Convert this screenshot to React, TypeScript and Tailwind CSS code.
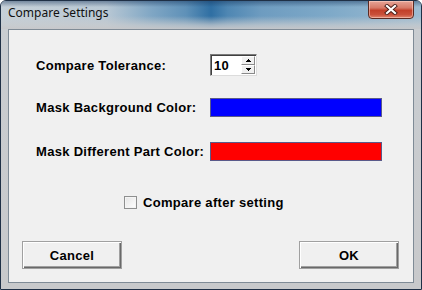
import React from "react";

const label = "text-[13px] font-bold tracking-[0.3px] text-black leading-none";

const CloseGlyph = () => (
  <svg width="14" height="11" viewBox="0 0 14 11">
    <path d="M3 2L11 9M11 2L3 9" stroke="#4a1e18" strokeWidth="4" strokeLinecap="square" />
    <path d="M3 2L11 9M11 2L3 9" stroke="#ffffff" strokeWidth="2.2" strokeLinecap="square" />
  </svg>
);

const SpinBox = ({ value }: { value: string }) => (
  <div className="w-[47px] h-[22px] flex bg-white border border-t-[#7a7a7a] border-l-[#7a7a7a] border-b-[#dcdcdc] border-r-[#dcdcdc] shadow-[inset_1px_1px_0_#404040]">
    <div className="flex-1 flex items-center pl-[3px] pt-[1px]">
      <span className={label}>{value}</span>
    </div>
    <div className="w-[15px] flex flex-col py-[1px] pr-[1px]">
      {["up", "down"].map((d) => (
        <div
          key={d}
          className="flex-1 flex items-center justify-center bg-[#f0f0f0] border border-t-white border-l-white border-b-[#8a8a8a] border-r-[#8a8a8a]"
        >
          <svg width="5" height="3" viewBox="0 0 5 3">
            {d === "up" ? (
              <path d="M2 0h1v1h1v1h1v1H0V2h1V1h1z" fill="#000" />
            ) : (
              <path d="M0 0h5v1H4v1H3v1H2V2H1V1H0z" fill="#000" />
            )}
          </svg>
        </div>
      ))}
    </div>
  </div>
);

const Swatch = ({ color }: { color: string }) => (
  <div className={`w-[172px] h-[19px] border border-[#5a5a8a] ${color}`} />
);

const WinButton = ({ text }: { text: string }) => (
  <button className="w-[100px] h-[28px] flex items-center justify-center bg-[#f0f0f0] border border-[#a0a0a0] shadow-[inset_1px_1px_0_#ffffff,inset_-1px_-1px_0_#696969,inset_-2px_-2px_0_#a0a0a0]">
    <span className={label}>{text}</span>
  </button>
);

export default function App() {
  return (
    <div
      className="w-[422px] h-[290px] overflow-hidden flex flex-col rounded-t-[6px] border border-[#1f3046] bg-[linear-gradient(180deg,#9fb4c6_0px,#b9c6d1_14px,#c9cdd1_28px,#c8c9cb_100%)]"
      style={{ fontFamily: "'Liberation Sans', Arial, sans-serif" }}
    >
      {/* title bar */}
      <div className="h-[28px] flex justify-between relative bg-[linear-gradient(90deg,#c6d0d8_0%,#b9c8d4_25%,#7fa6c4_36%,#5f91b8_44%,#2f6fa3_50%,#4f87b3_54%,#6e9cc0_62%,#7ea9c8_78%,#9dbcd2_100%)]">
        <div className="absolute inset-0 bg-[linear-gradient(180deg,rgba(20,50,90,0.45)_0px,rgba(255,255,255,0)_6px,rgba(255,255,255,0)_15px,rgba(200,203,206,0.75)_24px,rgba(200,200,202,0.95)_28px)]" />
        <span
          className="relative pl-[7px] pt-[6px] text-[12px] text-[#111] leading-none"
          style={{ fontFamily: "'Noto Sans', 'Open Sans', sans-serif" }}
        >
          Compare Settings
        </span>
        <div className="relative mr-[7px] w-[46px] h-[19px] -mt-[1px] flex items-center justify-center rounded-b-[4px] border border-[#5b2a22] bg-[linear-gradient(180deg,#e7a597_0%,#d77a68_40%,#c2402a_55%,#c9503a_80%,#e0866f_100%)] shadow-[inset_0_0_0_1px_rgba(255,220,210,0.5)]">
          <CloseGlyph />
        </div>
      </div>

      {/* client area */}
      <div className="mx-[7px] h-[254px] bg-[#f0f0f0] border border-[#7f8b96] flex flex-col">
        <div className="grid grid-cols-[174px_1fr] pl-[27px] pt-[24px] items-center">
          <div className={`${label} pt-[1px]`}>Compare Tolerance:</div>
          <SpinBox value="10" />

          <div className={`${label} mt-[22px]`}>Mask Background Color:</div>
          <div className="mt-[22px]">
            <Swatch color="bg-[#0000ff]" />
          </div>

          <div className={`${label} mt-[25px]`}>Mask Different Part Color:</div>
          <div className="mt-[25px]">
            <Swatch color="bg-[#ff0000]" />
          </div>
        </div>

        <div className="flex items-center pl-[115px] mt-[35px] gap-[6px]">
          <div className="w-[13px] h-[13px] bg-[linear-gradient(135deg,#e4e4e4,#ffffff)] border border-[#8e8f8f] shadow-[inset_0_0_0_1px_#f4f4f4]" />
          <span className={label}>Compare after setting</span>
        </div>

        <div className="flex justify-between pl-[13px] pr-[14px] mt-[32px]">
          <WinButton text="Cancel" />
          <WinButton text="OK" />
        </div>
      </div>
    </div>
  );
}
